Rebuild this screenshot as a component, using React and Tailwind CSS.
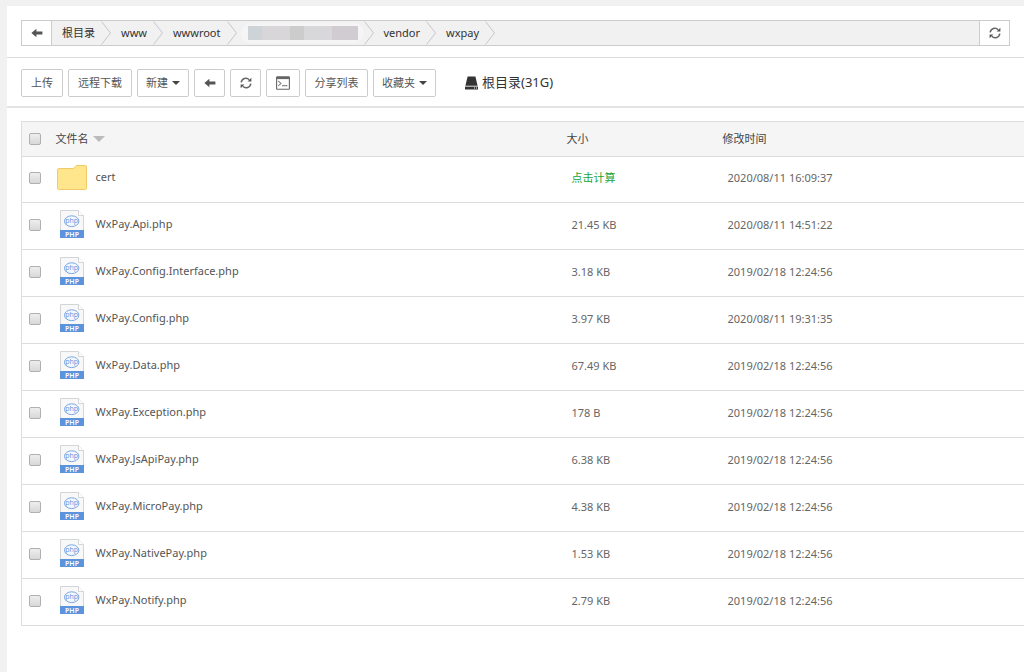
import React, { useState } from 'react';

const files = [
  { name: 'cert', type: 'dir', size: null, time: '2020/08/11 16:09:37' },
  { name: 'WxPay.Api.php', type: 'php', size: '21.45 KB', time: '2020/08/11 14:51:22' },
  { name: 'WxPay.Config.Interface.php', type: 'php', size: '3.18 KB', time: '2019/02/18 12:24:56' },
  { name: 'WxPay.Config.php', type: 'php', size: '3.97 KB', time: '2020/08/11 19:31:35' },
  { name: 'WxPay.Data.php', type: 'php', size: '67.49 KB', time: '2019/02/18 12:24:56' },
  { name: 'WxPay.Exception.php', type: 'php', size: '178 B', time: '2019/02/18 12:24:56' },
  { name: 'WxPay.JsApiPay.php', type: 'php', size: '6.38 KB', time: '2019/02/18 12:24:56' },
  { name: 'WxPay.MicroPay.php', type: 'php', size: '4.38 KB', time: '2019/02/18 12:24:56' },
  { name: 'WxPay.NativePay.php', type: 'php', size: '1.53 KB', time: '2019/02/18 12:24:56' },
  { name: 'WxPay.Notify.php', type: 'php', size: '2.79 KB', time: '2019/02/18 12:24:56' },
];

function ArrowLeftIcon() {
  return (
    <svg width="12" height="10" viewBox="0 0 12 10" fill="#555" aria-hidden="true">
      <path d="M0.4 5 5.4 0.8V3.6H11.4V6.4H5.4V9.2Z" />
    </svg>
  );
}

function RefreshIcon() {
  return (
    <svg width="12" height="12" viewBox="0 0 12 12" fill="none" stroke="#666" strokeWidth="1.5" aria-hidden="true">
      <path d="M1.2 5.4A4.7 4.7 0 0 1 9.2 2.7" />
      <path d="M10.8 6.6A4.7 4.7 0 0 1 2.8 9.3" />
      <path d="M11.4 0.8V4.6H7.6Z" fill="#555" stroke="none" />
      <path d="M0.6 11.2V7.4H4.4Z" fill="#555" stroke="none" />
    </svg>
  );
}

function TerminalIcon() {
  return (
    <svg width="14" height="14" viewBox="0 0 14 14" fill="none" stroke="#666" aria-hidden="true">
      <rect x="0.6" y="0.9" width="12.8" height="12.4" rx="0.6" strokeWidth="1.1" />
      <path d="M0.6 2H13.4" strokeWidth="2.2" />
      <path d="M2.2 5 5 7.4 2.2 9.8M6 9.6H11.4" stroke="#888" strokeWidth="1.1" />
    </svg>
  );
}

function DiskIcon() {
  return (
    <svg width="13" height="14" viewBox="0 0 13 14" fill="#333" aria-hidden="true">
      <path d="M2.6 0.5H10.4L12.6 9.8H0.4Z" />
      <path d="M0 10.6H13V13.5H0Z" />
      <path d="M9 11.6H10V12.5H9ZM11 11.6H12V12.5H11Z" fill="#fff" />
    </svg>
  );
}

function FolderIcon() {
  return (
    <svg width="30" height="25" viewBox="0 0 30 25" aria-hidden="true">
      <path
        d="M1.5 3.5H16Q17 3.5 17.6 2.6L18.4 1.2Q18.8 0.5 19.6 0.5H28.4Q29.5 0.5 29.5 1.6V23.4Q29.5 24.5 28.4 24.5H1.6Q0.5 24.5 0.5 23.4V4.6Q0.5 3.5 1.5 3.5Z"
        fill="#ffe58c"
        stroke="#f0ca66"
      />
    </svg>
  );
}

function PhpIcon() {
  return (
    <svg width="26" height="28" viewBox="0 0 26 28" aria-hidden="true">
      <path d="M1.5 0.5H19.5L24.5 5.5V27.5H1.5Z" fill="#f8f8f8" stroke="#d3d6d9" />
      <path d="M19.5 0.5V5.5H24.5" fill="#fff" stroke="#d3d6d9" />
      <ellipse cx="12.7" cy="11.2" rx="7.2" ry="5.4" fill="#f3f8ff" stroke="#7ba7e0" />
      <text x="12.7" y="13.2" textAnchor="middle" fontSize="7" fontFamily="Noto Sans, sans-serif" fill="#6b9be0">
        php
      </text>
      <path d="M1 20H25V28H1Z" fill="#5b93dc" />
      <text x="13" y="26.6" textAnchor="middle" fontSize="7" fontWeight="600" fontFamily="Noto Sans, sans-serif" fill="#fff">
        PHP
      </text>
    </svg>
  );
}

function Caret() {
  return <span className="border-x-4 border-t-4 border-x-transparent border-t-[#444]" />;
}

function Chevron() {
  return (
    <svg width="10" height="24" viewBox="0 0 10 24" fill="none" stroke="#c6c6d2" aria-hidden="true">
      <path d="M0.5 0.5 9.5 12 0.5 23.5" />
    </svg>
  );
}

function Checkbox({ label, checked, onChange }) {
  return (
    <input
      type="checkbox"
      aria-label={label}
      checked={checked}
      onChange={onChange}
      className="block size-3 appearance-none rounded-xs border border-[#b0b0b0] bg-linear-to-b from-[#eee] to-[#d8d8d8] checked:bg-[#20a53a]"
    />
  );
}

function ToolButton({ label, className, children }) {
  return (
    <button
      type="button"
      aria-label={label}
      className={`flex h-7 items-center justify-center gap-1 rounded-xs border border-[#ccc] bg-white hover:bg-gray-100 ${className}`}
    >
      {children}
    </button>
  );
}

function PathBar() {
  return (
    <div className="flex h-[52px] items-start border-b border-[#ddd] px-[14px] pt-[14px]">
      <div className="flex h-[26px] flex-1 border border-[#ccc] bg-[#f1f1f1]">
        <button type="button" aria-label="返回" className="flex w-[30px] items-center justify-center border-r border-[#ccc] bg-white">
          <ArrowLeftIcon />
        </button>
        <nav aria-label="路径" className="flex flex-1 items-center text-[#333]">
          <a href="#root" className="pr-[6px] pl-[10px]">根目录</a>
          <Chevron />
          <a href="#www" className="pr-[6px] pl-[10px]">www</a>
          <Chevron />
          <a href="#wwwroot" className="pr-[6px] pl-[10px]">wwwroot</a>
          <Chevron />
          <a href="#site" aria-label="site" className="ml-1 flex rounded-full bg-[#f5f5f5] py-[3px] pr-[6px] pl-[7px]">
            <span className="h-[14px] w-[14px] bg-[#cdd3d6]" />
            <span className="h-[14px] w-[28px] bg-[#d8d6d8]" />
            <span className="h-[14px] w-[14px] bg-[#cccccd]" />
            <span className="h-[14px] w-[28px] bg-[#d8d7da]" />
            <span className="h-[14px] w-[26px] bg-[#d0ccd1]" />
          </a>
          <Chevron />
          <a href="#vendor" className="pr-[6px] pl-[10px]">vendor</a>
          <Chevron />
          <a href="#wxpay" className="pr-[6px] pl-[10px]">wxpay</a>
          <Chevron />
        </nav>
        <button type="button" aria-label="刷新" className="flex w-[30px] items-center justify-center border-l border-[#ccc] bg-white">
          <RefreshIcon />
        </button>
      </div>
    </div>
  );
}

function Toolbar() {
  return (
    <div className="flex h-[50px] items-start gap-[5px] border-b-2 border-[#e4e4e4] pt-[11px] pl-[14px] text-[#555]">
      <ToolButton className="w-[42px]">上传</ToolButton>
      <ToolButton className="w-16">远程下载</ToolButton>
      <ToolButton className="w-[52px]">新建<Caret /></ToolButton>
      <ToolButton label="后退" className="w-[31px]"><ArrowLeftIcon /></ToolButton>
      <ToolButton label="刷新" className="w-[31px]"><RefreshIcon /></ToolButton>
      <ToolButton label="终端" className="w-[34px]"><TerminalIcon /></ToolButton>
      <ToolButton className="w-[63px]">分享列表</ToolButton>
      <ToolButton className="w-[63px]">收藏夹<Caret /></ToolButton>
      <a href="#disk" className="ml-6 flex h-7 items-center gap-1 text-[13px] text-[#333]">
        <DiskIcon />
        根目录(31G)
      </a>
    </div>
  );
}

function App() {
  const [selected, setSelected] = useState([]);

  const handleToggle = (name) => {
    setSelected(selected.includes(name) ? selected.filter(n => n !== name) : [...selected, name]);
  }

  const handleToggleAll = () => {
    setSelected(selected.length === files.length ? [] : files.map(f => f.name));
  }

  return (
    <div className="min-h-screen overflow-hidden bg-[#f1f1f1] pt-[6px] pl-[7px] font-['Noto_Sans','Noto_Sans_CJK_SC',sans-serif] text-[11px]">
      <main className="min-h-screen bg-white">
        <PathBar />
        <Toolbar />
        <div className="pt-[13px] pl-[14px]">
          <table className="w-full table-fixed border-collapse border border-r-0 border-[#ddd] text-left text-[#666]">
            <thead className="bg-[#f5f5f5] text-[#444]">
              <tr className="h-[35px] border-b border-[#ddd]">
                <th className="w-[34px] pl-[7px]">
                  <Checkbox label="全选" checked={selected.length === files.length} onChange={handleToggleAll} />
                </th>
                <th className="w-[511px] font-normal">
                  <button type="button" className="flex items-center gap-1">
                    文件名
                    <span className="border-x-[6px] border-t-[6px] border-x-transparent border-t-[#bbb]" />
                  </button>
                </th>
                <th className="w-[156px] font-normal">大小</th>
                <th className="font-normal">修改时间</th>
              </tr>
            </thead>
            <tbody>
              {files.map((file) => (
                <tr key={file.name} className={`border-b border-[#ddd] ${file.type === 'dir' ? 'h-[46px]' : 'h-[47px]'}`}>
                  <td className="pb-[3px] pl-[7px]">
                    <Checkbox label={file.name} checked={selected.includes(file.name)} onChange={() => handleToggle(file.name)} />
                  </td>
                  <td className="pb-1">
                    <div className="flex items-center gap-2">
                      <span className="flex w-8 justify-center">
                        {file.type === 'dir' ? <FolderIcon /> : <PhpIcon />}
                      </span>
                      <a href={`#${file.name}`} className="text-[#555]">{file.name}</a>
                    </div>
                  </td>
                  <td className="pb-[2px] pl-[5px]">
                    {file.size || <button type="button" className="text-[#20a53a]">点击计算</button>}
                  </td>
                  <td className="pb-[2px] pl-[5px]">{file.time}</td>
                </tr>
              ))}
            </tbody>
          </table>
        </div>
      </main>
    </div>
  );
}

export default App;
